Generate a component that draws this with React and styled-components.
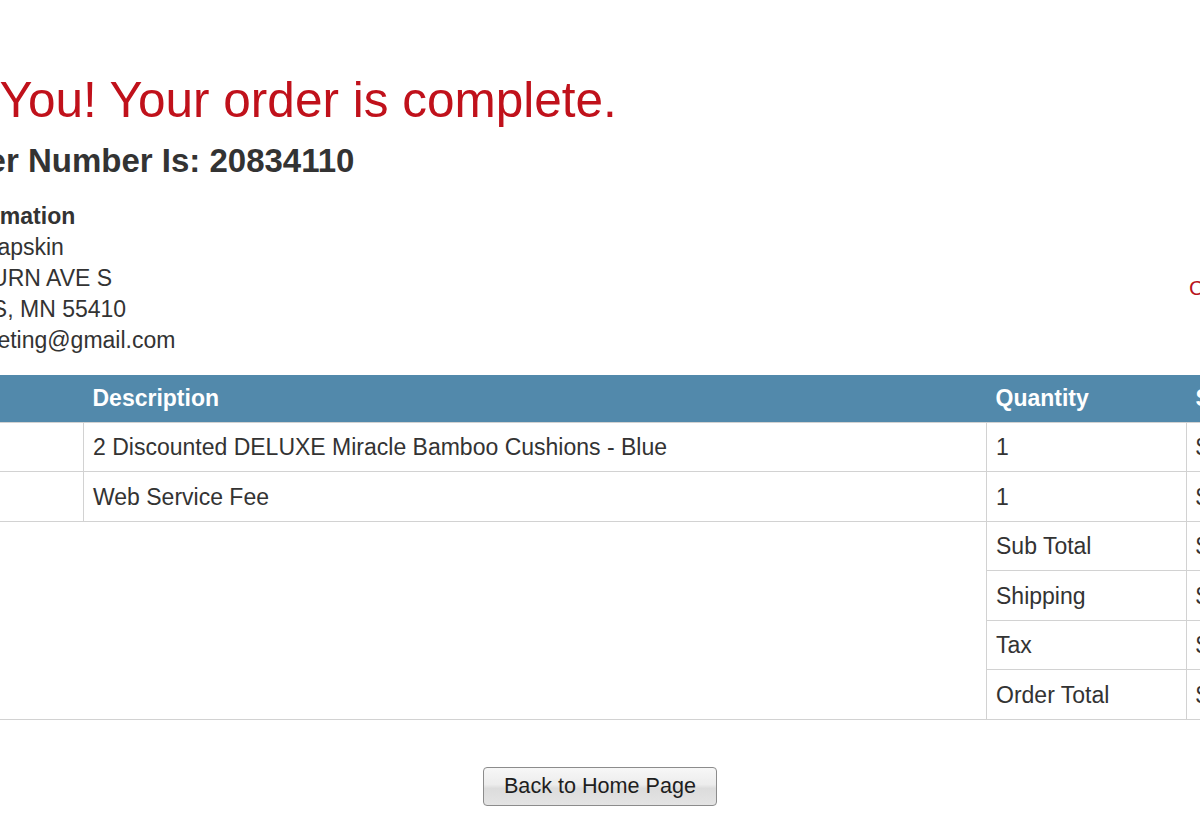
import React from "react";
import styled, { createGlobalStyle } from "styled-components";

const Global = createGlobalStyle`
  html, body { margin: 0; padding: 0; background: #fff; overflow: hidden; }
  body { font-family: "Liberation Sans", Arial, sans-serif; color: #333; }
`;

const Page = styled.div`
  width: 1490px;
  margin-left: -145px;
  padding-top: 72px;
`;

const Header = styled.div`
  display: flex;
  align-items: flex-start;
`;

const Main = styled.div`
  display: flex;
  flex-direction: column;
`;

const Aside = styled.div`
  margin-left: auto;
  width: 156px;
  padding-top: 204px;
`;

const AsideLink = styled.div`
  color: #b8141c;
  font-size: 21px;
  line-height: 24px;
  white-space: nowrap;
`;

const Title = styled.h1`
  margin: 0 0 0 -6px;
  font-size: 49.5px;
  font-weight: normal;
  line-height: 56px;
  color: #c0111b;
  white-space: nowrap;
`;

const OrderNo = styled.h2`
  margin: 14px 0 0 -8px;
  font-size: 33px;
  font-weight: bold;
  line-height: 37px;
  color: #333;
  white-space: nowrap;
`;

const Info = styled.div`
  margin: 22px 0 0 -11px;
  font-size: 23px;
  line-height: 31px;
  color: #333;
  white-space: nowrap;
`;

const InfoTitle = styled.div`
  font-weight: bold;
`;

const Address = styled.div`
  padding-left: 6px;
`;

const Table = styled.table`
  margin-top: 18.5px;
  width: 1490px;
  table-layout: fixed;
  border-collapse: collapse;
  font-size: 23px;
  line-height: 25px;
`;

const Th = styled.th`
  background: #5289ab;
  color: #fff;
  font-weight: bold;
  text-align: left;
  padding: 11px 9px;
  white-space: nowrap;
  overflow: hidden;
`;

const Td = styled.td`
  border: 1px solid #d2d2d2;
  padding: 12.5px 9px 11px;
  color: #333;
  white-space: nowrap;
  overflow: hidden;
  vertical-align: top;
`;

const Footer = styled.div`
  display: flex;
  justify-content: center;
  margin-top: 47px;
`;

const Button = styled.button`
  width: 234px;
  height: 39px;
  font-family: "Liberation Sans", Arial, sans-serif;
  font-size: 21.6px;
  color: #1e1e1e;
  background: linear-gradient(#f7f7f7 0%, #ececec 45%, #dcdcdc 55%, #e4e4e4 100%);
  border: 1px solid #8c8c8c;
  border-radius: 4px;
  padding: 0;
  cursor: pointer;
`;

const items = [
  { sku: "BC-2DLX-BL", desc: "2 Discounted DELUXE Miracle Bamboo Cushions - Blue", qty: "1", sub: "$49.99" },
  { sku: "WEBFEE", desc: "Web Service Fee", qty: "1", sub: "$4.99" },
];

const totals = [
  ["Sub Total", "$54.98"],
  ["Shipping", "$9.99"],
  ["Tax", "$0.00"],
  ["Order Total", "$64.97"],
];

export default function App() {
  return (
    <>
      <Global />
      <Page>
        <Header>
          <Main>
            <Title>Thank You! Your order is complete.</Title>
            <OrderNo>Your Order Number Is: 20834110</OrderNo>
            <Info>
              <InfoTitle>Shipping Information</InfoTitle>
              <div>Christopher Knapskin</div>
              <Address>
                <div>4528 WASHBURN AVE S</div>
                <div>MINNEAPOLIS, MN 55410</div>
              </Address>
              <div>cknapskinmarketing@gmail.com</div>
            </Info>
          </Main>
          <Aside>
            <AsideLink>Customer Service</AsideLink>
          </Aside>
        </Header>
        <Table>
          <colgroup>
            <col style={{ width: "228px" }} />
            <col style={{ width: "903px" }} />
            <col style={{ width: "200px" }} />
            <col style={{ width: "159px" }} />
          </colgroup>
          <thead>
            <tr>
              <Th>Item #</Th>
              <Th>Description</Th>
              <Th>Quantity</Th>
              <Th>Subtotal</Th>
            </tr>
          </thead>
          <tbody>
            {items.map((it) => (
              <tr key={it.sku}>
                <Td>{it.sku}</Td>
                <Td>{it.desc}</Td>
                <Td>{it.qty}</Td>
                <Td>{it.sub}</Td>
              </tr>
            ))}
            {totals.map(([label, val], i) => (
              <tr key={label}>
                {i === 0 && <Td colSpan={2} rowSpan={4} />}
                <Td>{label}</Td>
                <Td>{val}</Td>
              </tr>
            ))}
          </tbody>
        </Table>
        <Footer>
          <Button>Back to Home Page</Button>
        </Footer>
      </Page>
    </>
  );
}
